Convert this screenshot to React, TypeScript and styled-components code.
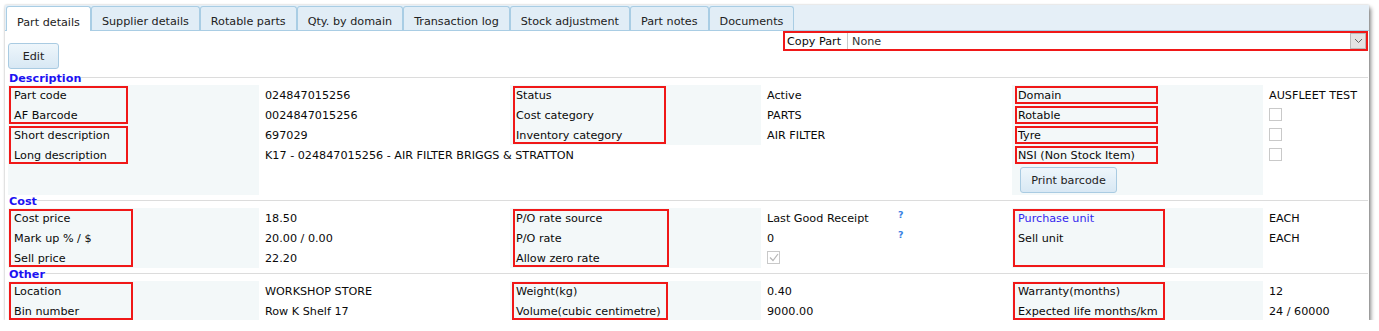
import styled, { createGlobalStyle } from 'styled-components';

const GlobalStyle = createGlobalStyle`
	body {
		margin: 0;
		background: #fff;
		font-family: "DejaVu Sans", Verdana, sans-serif;
		font-size: 11.2px;
		color: #0a0a0a;
	}
`;

const Panel = styled.div`
	margin: 5px 0 0 5px;
	width: 1364px;
	height: 315px;
	overflow: hidden;
	background: #fff;
	box-shadow: 2px 3px 4px rgba(0, 0, 0, 0.45), 0 0 2px rgba(0, 0, 0, 0.2);
`;

const TabBar = styled.div`
	display: flex;
	align-items: flex-end;
	height: 26px;
	padding-left: 1px;
	box-sizing: border-box;
	background: #e5eff7;
	border-bottom: 1px solid #a9cde4;
`;

const Tab = styled.div<{ $active?: boolean }>`
	height: ${p => (p.$active ? 25 : 24)}px;
	margin-bottom: ${p => (p.$active ? -1 : 0)}px;
	box-sizing: border-box;
	padding: ${p => (p.$active ? 9 : 8)}px 10px 0;
	border: 1px solid #a9cde4;
	border-bottom: none;
	border-radius: 3px 3px 0 0;
	background: ${p => (p.$active ? '#fff' : '#e1edf6')};
	line-height: 14px;
	white-space: nowrap;
	color: #222;
`;

const Body = styled.div`
	padding: 0 1px 0 3px;
`;

const Toolbar = styled.div`
	display: flex;
	justify-content: space-between;
	align-items: flex-start;
	height: 41px;
`;

const Button = styled.button<{ $w: number; $top?: number }>`
	width: ${p => p.$w}px;
	height: 26px;
	margin-top: ${p => p.$top ?? 0}px;
	padding: 0;
	font: inherit;
	color: #222;
	border: 1px solid #a9cbe2;
	border-radius: 3px;
	background: linear-gradient(#eef6fb, #d8e8f4);
`;

const CopyBar = styled.div`
	display: flex;
	align-items: center;
	width: 585px;
	height: 20px;
	box-sizing: border-box;
	background: #fff;
	outline: 2px solid #f01818;
	outline-offset: -2px;
`;

const CopyLabel = styled.div`
	height: 16px;
	line-height: 17px;
	padding: 0 6px 0 4px;
	border-right: 1px solid #c9c9c9;
`;

const SelectValue = styled.div`
	flex: 1;
	padding: 1px 0 0 4px;
	color: #333;
`;

const Arrow = styled.div`
	display: flex;
	align-items: center;
	justify-content: center;
	width: 14px;
	height: 14px;
	margin-right: 2px;
	border: 1px solid #b9b9b9;
	background: #e4e4e4;
`;

const SectionHeader = styled.div`
	display: flex;
	align-items: center;
	height: 13px;
	padding-left: 1px;
	color: #1c12f2;
	font-weight: bold;
	&::after {
		content: '';
		flex: 1;
		margin-top: -3px;
		border-top: 1px solid #dcdcdc;
	}
`;

const Grid = styled.div<{ $rows: string }>`
	display: grid;
	grid-template-columns: repeat(5, 251px) 1fr;
	grid-template-rows: ${p => p.$rows};
`;

const Block = styled.div<{ $area: string; $shaded?: boolean }>`
	grid-area: ${p => p.$area};
	display: flex;
	flex-direction: column;
	background: ${p => (p.$shaded ? '#f3f8f9' : 'transparent')};
`;

const Cell = styled.div<{ $link?: boolean }>`
	height: 20px;
	box-sizing: border-box;
	padding-top: 1px;
	line-height: 20px;
	padding-left: 6px;
	white-space: nowrap;
	color: ${p => (p.$link ? '#3326ee' : '#0a0a0a')};
`;

const Mark = styled.div<{ $x: number; $w: number }>`
	margin-left: ${p => p.$x}px;
	width: ${p => p.$w}px;
	outline: 2px solid #f01818;
	outline-offset: -3px;
	& > ${Cell} {
		padding-left: ${p => 6 - p.$x}px;
	}
`;

const HelpCell = styled(Cell)`
	display: grid;
	grid-template-columns: 131px auto;
`;

const Help = styled.span`
	color: #3a82e4;
	font-weight: bold;
	font-size: 9.5px;
	line-height: 12px;
`;

const Check = styled.span`
	display: flex;
	align-items: center;
	justify-content: center;
	width: 11px;
	height: 11px;
	margin-top: 2px;
	border: 1px solid #c9c9c9;
	background: #fff;
`;

const ButtonRow = styled.div`
	padding: 2px 0 0 8px;
`;

const tabs = [
	'Part details',
	'Supplier details',
	'Rotable parts',
	'Qty. by domain',
	'Transaction log',
	'Stock adjustment',
	'Part notes',
	'Documents',
];

function Checkbox({ checked }: { checked?: boolean }) {
	return (
		<Cell>
			<Check>
				{checked && (
					<svg width="10" height="9" viewBox="0 0 10 9">
						<polyline points="1,4.5 4,7.5 9,1" fill="none" stroke="#b8b8b8" strokeWidth="1.2" />
					</svg>
				)}
			</Check>
		</Cell>
	);
}

function App() {
	return (
		<>
			<GlobalStyle />
			<Panel>
				<TabBar>
					{tabs.map((t, i) => (
						<Tab key={t} $active={i === 0}>
							{t}
						</Tab>
					))}
				</TabBar>
				<Body>
					<Toolbar>
						<Button $w={51} $top={12}>
							Edit
						</Button>
						<CopyBar>
							<CopyLabel>Copy Part</CopyLabel>
							<SelectValue>None</SelectValue>
							<Arrow>
								<svg width="9" height="6" viewBox="0 0 9 6">
									<polyline points="1,1 4.5,4.5 8,1" fill="none" stroke="#666" strokeWidth="1" />
								</svg>
							</Arrow>
						</CopyBar>
					</Toolbar>

					<SectionHeader>Description</SectionHeader>
					<Grid $rows="20px 20px 20px 20px 30px">
						<Block $area="1 / 1 / 6 / 2" $shaded>
							<Mark $x={0} $w={121}>
								<Cell>Part code</Cell>
								<Cell>AF Barcode</Cell>
							</Mark>
							<Mark $x={0} $w={121}>
								<Cell>Short description</Cell>
								<Cell>Long description</Cell>
							</Mark>
						</Block>
						<Block $area="1 / 2 / 4 / 3">
							<Cell>024847015256</Cell>
							<Cell>0024847015256</Cell>
							<Cell>697029</Cell>
						</Block>
						<Block $area="4 / 2 / 5 / 5">
							<Cell>K17 - 024847015256 - AIR FILTER BRIGGS &amp; STRATTON</Cell>
						</Block>
						<Block $area="1 / 3 / 4 / 4" $shaded>
							<Mark $x={2} $w={155}>
								<Cell>Status</Cell>
								<Cell>Cost category</Cell>
								<Cell>Inventory category</Cell>
							</Mark>
						</Block>
						<Block $area="1 / 4 / 4 / 5">
							<Cell>Active</Cell>
							<Cell>PARTS</Cell>
							<Cell>AIR FILTER</Cell>
						</Block>
						<Block $area="1 / 5 / 6 / 6" $shaded>
							{['Domain', 'Rotable', 'Tyre', 'NSI (Non Stock Item)'].map(l => (
								<Mark key={l} $x={2} $w={145}>
									<Cell>{l}</Cell>
								</Mark>
							))}
							<ButtonRow>
								<Button $w={97}>Print barcode</Button>
							</ButtonRow>
						</Block>
						<Block $area="1 / 6 / 5 / 7">
							<Cell>AUSFLEET TEST</Cell>
							<Checkbox />
							<Checkbox />
							<Checkbox />
						</Block>
					</Grid>

					<SectionHeader>Cost</SectionHeader>
					<Grid $rows="20px 20px 20px">
						<Block $area="1 / 1 / 4 / 2" $shaded>
							<Mark $x={0} $w={126}>
								<Cell>Cost price</Cell>
								<Cell>Mark up % / $</Cell>
								<Cell>Sell price</Cell>
							</Mark>
						</Block>
						<Block $area="1 / 2 / 4 / 3">
							<Cell>18.50</Cell>
							<Cell>20.00 / 0.00</Cell>
							<Cell>22.20</Cell>
						</Block>
						<Block $area="1 / 3 / 4 / 4" $shaded>
							<Mark $x={2} $w={158}>
								<Cell>P/O rate source</Cell>
								<Cell>P/O rate</Cell>
								<Cell>Allow zero rate</Cell>
							</Mark>
						</Block>
						<Block $area="1 / 4 / 4 / 5">
							<HelpCell>
								<span>Last Good Receipt</span>
								<Help>?</Help>
							</HelpCell>
							<HelpCell>
								<span>0</span>
								<Help>?</Help>
							</HelpCell>
							<Checkbox checked />
						</Block>
						<Block $area="1 / 5 / 4 / 6" $shaded>
							<Mark $x={0} $w={154}>
								<Cell $link>Purchase unit</Cell>
								<Cell>Sell unit</Cell>
								<Cell />
							</Mark>
						</Block>
						<Block $area="1 / 6 / 4 / 7">
							<Cell>EACH</Cell>
							<Cell>EACH</Cell>
						</Block>
					</Grid>

					<SectionHeader>Other</SectionHeader>
					<Grid $rows="20px 20px">
						<Block $area="1 / 1 / 3 / 2" $shaded>
							<Mark $x={0} $w={126}>
								<Cell>Location</Cell>
								<Cell>Bin number</Cell>
							</Mark>
						</Block>
						<Block $area="1 / 2 / 3 / 3">
							<Cell>WORKSHOP STORE</Cell>
							<Cell>Row K Shelf 17</Cell>
						</Block>
						<Block $area="1 / 3 / 3 / 4" $shaded>
							<Mark $x={1} $w={158}>
								<Cell>Weight(kg)</Cell>
								<Cell>Volume(cubic centimetre)</Cell>
							</Mark>
						</Block>
						<Block $area="1 / 4 / 3 / 5">
							<Cell>0.40</Cell>
							<Cell>9000.00</Cell>
						</Block>
						<Block $area="1 / 5 / 3 / 6" $shaded>
							<Mark $x={0} $w={154}>
								<Cell>Warranty(months)</Cell>
								<Cell>Expected life months/km</Cell>
							</Mark>
						</Block>
						<Block $area="1 / 6 / 3 / 7">
							<Cell>12</Cell>
							<Cell>24 / 60000</Cell>
						</Block>
					</Grid>
				</Body>
			</Panel>
		</>
	);
}

export default App;
